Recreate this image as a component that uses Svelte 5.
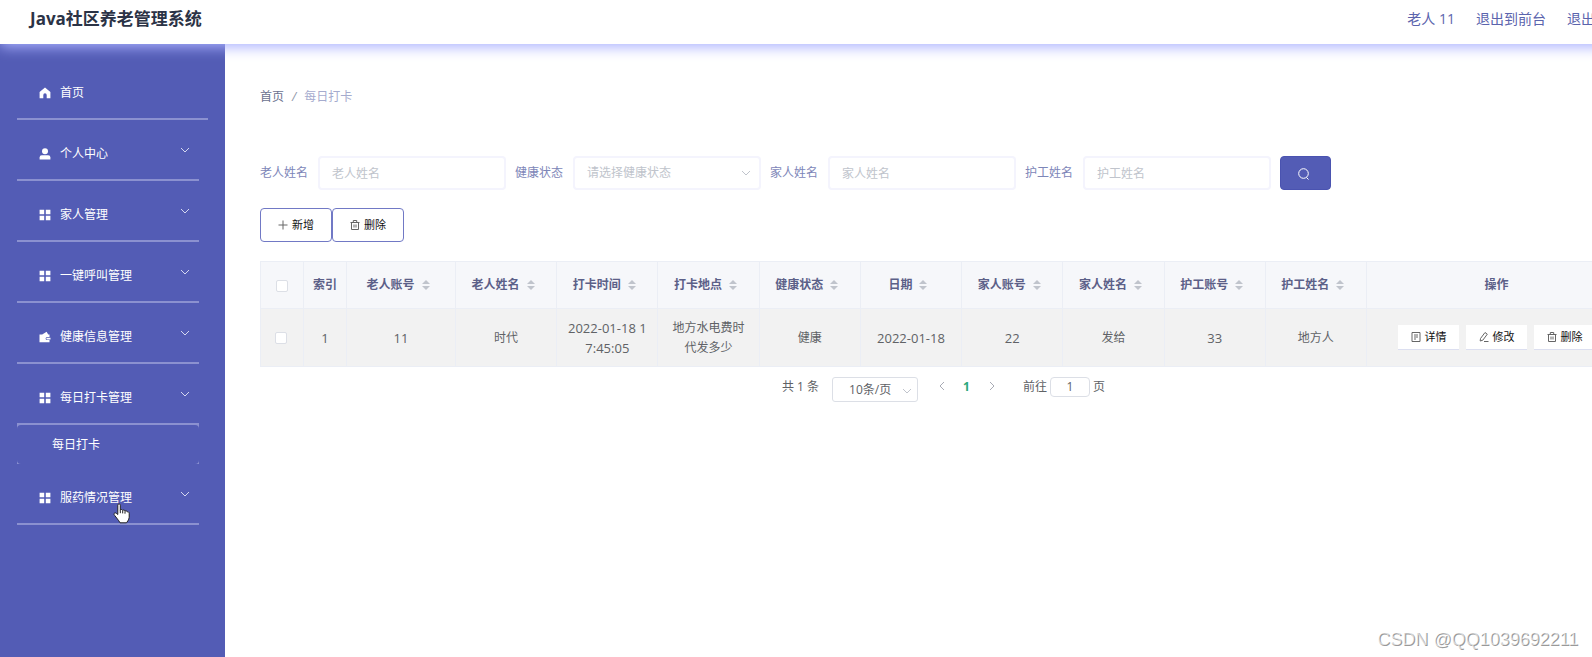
<script lang="ts">
  let keyword = { elder: '', health: '', family: '', nurse: '' };
  let pageSize = '10';
  let jumpPage = '1';

  const menus = [
    { name: '个人中心', icon: 'user', children: [] },
    { name: '家人管理', icon: 'grid', children: [] },
    { name: '一键呼叫管理', icon: 'grid', children: [] },
    { name: '健康信息管理', icon: 'wallet', children: [] },
    { name: '每日打卡管理', icon: 'grid', children: ['每日打卡'] },
    { name: '服药情况管理', icon: 'grid', children: [] }
  ];

  const columns = [
    { label: '老人账号', key: 'elderNo' },
    { label: '老人姓名', key: 'elderName' },
    { label: '打卡时间', key: 'time' },
    { label: '打卡地点', key: 'place' },
    { label: '健康状态', key: 'health' },
    { label: '日期', key: 'date' },
    { label: '家人账号', key: 'familyNo' },
    { label: '家人姓名', key: 'familyName' },
    { label: '护工账号', key: 'nurseNo' },
    { label: '护工姓名', key: 'nurseName' }
  ];

  const rows: any[] = [
    {
      elderNo: '11',
      elderName: '时代',
      time: '2022-01-18 17:45:05',
      place: '地方水电费时代发多少',
      health: '健康',
      date: '2022-01-18',
      familyNo: '22',
      familyName: '发给',
      nurseNo: '33',
      nurseName: '地方人'
    }
  ];

  const isNumeric = (value: string) => /^[\d\-: ]+$/.test(value);
</script>

<div class="viewport">
  <div class="page">
    <header class="topbar">
      <h1>Java社区养老管理系统</h1>
      <nav>
        <span>老人 11</span>
        <a href="#front">退出到前台</a>
        <a href="#logout">退出登录</a>
      </nav>
    </header>

    <div class="body">
      <aside>
        <ul class="menu">
          <li>
            <a href="#home" class="menu-item home">
              <svg class="menu-icon" viewBox="0 0 12 12"><path d="M6 .4 11.4 5v6.2H7.7V8a1.7 1.7 0 0 0-3.4 0v3.2H.6V5z" /></svg>
              首页
            </a>
          </li>
          {#each menus as menu}
            <li>
              <button type="button" class="menu-item">
                <svg class="menu-icon" viewBox="0 0 12 12">
                  {#if menu.icon === 'user'}
                    <circle cx="6" cy="3.2" r="3" />
                    <path d="M.6 11.6V9.4q0-2.2 2.2-2.2h6.4q2.2 0 2.2 2.2v2.2z" />
                  {:else if menu.icon === 'wallet'}
                    <path d="M.5 3.6h2.7L7.6.8l1.6 2.8h1.3v2.3H8.2a1.6 1.6 0 0 0 0 3.2h2.3v2.1H.5z" />
                    <path d="M8.2 6.7h3.3v1.7H8.2a.8.8 0 0 1 0-1.7z" />
                  {:else}
                    <path d="M.6.8h4.6v4.4H.6zM6.8.8h4.6v4.4H6.8zM.6 6.8h4.6v4.4H.6zM6.8 6.8h4.6v4.4H6.8z" />
                  {/if}
                </svg>
                {menu.name}
                <svg class="arrow" viewBox="0 0 10 6"><path d="M1 1l4 4 4-4" /></svg>
              </button>
              {#if menu.children.length}
                <div class="submenu">
                  {#each menu.children as child}
                    <a href="#checkin" class="sub-item">{child}</a>
                  {/each}
                </div>
              {/if}
            </li>
          {/each}
        </ul>
        <svg class="pointer" viewBox="0 0 17 21">
          <path d="M4.800 11.500V2.200c0-1.900 2.500-1.900 2.500 0v5c.4-1 2.200-.9 2.400.3.600-.8 2.100-.6 2.300.6.700-.7 2.200-.3 2.300.9.800-.4 1.900.1 1.900 1.300v4c0 1.300-.8 2.500-1.300 3.500l-1.400 2H7l-1.200-2L2.900 14c-.7-1.100-1.700-1.800-1.900-2.700-.2-1.300 1.400-1.900 2.400-.9z" />
          <path d="M7.300 7.200v3M9.700 7.600v2.800M12 8.200v2.500" />
        </svg>
      </aside>

      <main>
        <div class="breadcrumb">
          <a href="#home">首页</a><i>/</i><span>每日打卡</span>
        </div>

        <form class="search">
          <label for="elder">老人姓名</label>
          <input id="elder" type="text" placeholder="老人姓名" bind:value={keyword.elder} />
          <label for="health">健康状态</label>
          <div class="select">
            <select id="health" bind:value={keyword.health}>
              <option value="">请选择健康状态</option>
              <option value="健康">健康</option>
            </select>
            <svg viewBox="0 0 10 6"><path d="M1 1l4 4 4-4" /></svg>
          </div>
          <label for="family">家人姓名</label>
          <input id="family" type="text" placeholder="家人姓名" bind:value={keyword.family} />
          <label for="nurse">护工姓名</label>
          <input id="nurse" type="text" placeholder="护工姓名" bind:value={keyword.nurse} />
          <button type="button" class="search-button" aria-label="查询">
            <svg viewBox="0 0 12 12"><circle cx="5.5" cy="5.5" r="4.8" /><path d="M8.500 9.500l2 2" /></svg>
          </button>
        </form>

        <div class="tools">
          <button type="button">
            <svg viewBox="0 0 10 10"><path d="M5 .5v9M.5 5h9" /></svg>
            新增
          </button>
          <button type="button">
            <svg viewBox="0 0 10 10"><path d="M.5 2.500h9M3.300 2.500v-2h3.400v2M1.500 2.500v7h7v-7M4 4.500v3M6 4.500v3" /></svg>
            删除
          </button>
        </div>

        <table>
          <colgroup>
            <col class="col-check" />
            <col class="col-check" />
            <col class="col-first" />
            <col span="9" />
            <col class="col-action" />
          </colgroup>
          <thead>
            <tr>
              <th><input type="checkbox" aria-label="全选" /></th>
              <th class="index">索引</th>
              {#each columns as column}
                <th>
                  <span class="th-cell">
                    {column.label}
                    <svg class="sort" viewBox="0 0 8 10"><path d="M4 0l4 4H0zM4 10L0 6h8z" /></svg>
                  </span>
                </th>
              {/each}
              <th>操作</th>
            </tr>
          </thead>
          <tbody>
            {#each rows as row, i}
              <tr>
                <td class="check"><input type="checkbox" aria-label="选择" /></td>
                <td class="number">{i + 1}</td>
                {#each columns as column}
                  <td class:number={isNumeric(row[column.key])}>{row[column.key]}</td>
                {/each}
                <td>
                  <div class="actions">
                    <button type="button">
                      <svg viewBox="0 0 10 10"><path d="M1 .5h8v9H1zM3 3h4M3 5h4M3 7h2" /></svg>
                      详情
                    </button>
                    <button type="button">
                      <svg viewBox="0 0 10 10"><path d="M1.500 6.500l4.500-6 2.300 1.700-4.500 6-2.600.8zM5 9.500h4.500" /></svg>
                      修改
                    </button>
                    <button type="button">
                      <svg viewBox="0 0 10 10"><path d="M.5 2.500h9M3.300 2.500v-2h3.400v2M1.500 2.500v7h7v-7M4 4.500v3M6 4.500v3" /></svg>
                      删除
                    </button>
                  </div>
                </td>
              </tr>
            {/each}
          </tbody>
        </table>

        <div class="pagination">
          <span class="total">共 1 条</span>
          <div class="select small">
            <select aria-label="每页条数" bind:value={pageSize}>
              <option value="10">10条/页</option>
              <option value="20">20条/页</option>
            </select>
            <svg viewBox="0 0 10 6"><path d="M1 1l4 4 4-4" /></svg>
          </div>
          <button type="button" aria-label="上一页"><svg viewBox="0 0 6 10"><path d="M5 1L1 5l4 4" /></svg></button>
          <button type="button" class="current">1</button>
          <button type="button" aria-label="下一页"><svg viewBox="0 0 6 10"><path d="M1 1l4 4-4 4" /></svg></button>
          <label class="jump">前往<input type="text" bind:value={jumpPage} />页</label>
        </div>
      </main>
    </div>
  </div>
  <div class="watermark">CSDN @QQ1039692211</div>
</div>

<style>
  :global(body) {
    background: #fff;
  }
  .viewport {
    position: relative;
    overflow: hidden;
    font-family: "Open Sans", "Noto Sans CJK SC", sans-serif;
    font-size: 12px;
    line-height: 20px;
    color: #606266;
  }
  .page {
    display: flex;
    flex-direction: column;
    width: calc(100% + 70px);
    min-height: 100vh;
  }
  .viewport * {
    box-sizing: border-box;
  }
  button, input, select {
    font: inherit;
    color: inherit;
    margin: 0;
  }
  button {
    cursor: pointer;
  }
  a {
    color: inherit;
    text-decoration: none;
  }
  svg {
    flex: none;
    fill: none;
    stroke: currentColor;
  }

  .topbar {
    position: relative;
    z-index: 1;
    display: flex;
    align-items: center;
    justify-content: space-between;
    height: 44px;
    padding: 0 39px 7px 30px;
    background: #fff;
    box-shadow: 0 3px 14px rgb(170, 177, 255);
  }
  h1 {
    margin: 0;
    font-size: 17px;
    font-weight: 700;
    color: #2b3346;
  }
  nav {
    display: flex;
    gap: 21px;
    font-size: 14px;
    color: #5b64ad;
  }

  .body {
    display: flex;
    flex: 1;
  }
  aside {
    position: relative;
    flex: none;
    width: 225px;
    background: #535cb5;
    color: #fff;
  }
  .menu {
    list-style: none;
    margin: 0;
    padding: 15px 26px 0 17px;
  }
  .menu-item {
    display: flex;
    align-items: center;
    gap: 9px;
    width: 100%;
    height: 61px;
    padding: 8px 9px 0 22px;
    border: 0;
    border-bottom: 2px solid #8b91d0;
    background: none;
    text-align: left;
  }
  .home {
    width: calc(100% + 9px);
  }
  .menu-icon {
    width: 12px;
    height: 12px;
    fill: currentColor;
    stroke: none;
  }
  .arrow {
    width: 10px;
    height: 6px;
    margin: 0 0 8px auto;
    stroke: #d5d8f0;
  }
  .submenu {
    background: #8b91d0;
  }
  .sub-item {
    display: block;
    height: 39px;
    padding: 10px 0 0 35px;
    border-radius: 4px;
    background: #535cb5;
  }
  .pointer {
    position: absolute;
    left: 113px;
    top: 459px;
    width: 17px;
    height: 21px;
    fill: #fff;
    stroke: #222;
  }

  main {
    flex: 1;
    min-width: 0;
    padding: 43px 35px 0;
  }
  .breadcrumb {
    display: flex;
    gap: 8px;
    margin-bottom: 49px;
    color: #a5abce;
  }
  .breadcrumb a {
    color: #6b718f;
  }
  .breadcrumb i {
    color: #9095a8;
  }

  .search {
    display: flex;
    align-items: center;
    margin-bottom: 18px;
  }
  .search label {
    margin-right: 10px;
    color: #7d86b8;
  }
  .search input, .search .select {
    width: 188px;
    height: 34px;
    margin-right: 9px;
  }
  .search input, select {
    padding: 0 12px;
    border: 2px solid #f4f4fd;
    border-radius: 4px;
    background: #fff;
    outline: none;
  }
  .search input::placeholder {
    color: #c0c4cc;
    opacity: 1;
  }
  .select {
    position: relative;
    color: #c0c4cc;
  }
  select {
    width: 100%;
    height: 100%;
    appearance: none;
  }
  .select svg {
    position: absolute;
    right: 10px;
    top: 14px;
    width: 10px;
    height: 6px;
    pointer-events: none;
  }
  .search-button {
    width: 51px;
    height: 34px;
    padding: 0 4px 0 0;
    border: 1px solid #4a53b0;
    border-radius: 4px;
    background: #535cb5;
    color: #fff;
  }
  .search-button svg {
    width: 12px;
    height: 12px;
    vertical-align: middle;
  }

  .tools {
    display: flex;
    margin-bottom: 19px;
  }
  .tools button {
    display: flex;
    align-items: center;
    justify-content: center;
    gap: 4px;
    width: 72px;
    height: 34px;
    padding: 0;
    border: 1px solid #7179c5;
    border-radius: 4px;
    background: #fff;
    font-size: 11px;
    color: #111;
  }
  .tools svg, .actions svg {
    width: 10px;
    height: 10px;
    stroke: #666;
  }

  table {
    width: 100%;
    table-layout: fixed;
    border-collapse: collapse;
    text-align: center;
  }
  .col-check {
    width: 43px;
  }
  .col-first {
    width: 109px;
  }
  .col-action {
    width: 260px;
  }
  th, td {
    padding: 0 9px;
    border: 1px solid #ebeef5;
    word-break: break-all;
  }
  th {
    height: 47px;
    background: #f6f7fa;
    color: #5c6088;
    font-weight: 700;
  }
  th.index {
    padding: 0;
  }
  td {
    height: 58px;
    background: #f2f2f2;
  }
  td.check {
    padding-right: 12px;
  }
  .number {
    font-size: 13px;
  }
  .th-cell {
    display: flex;
    align-items: center;
    justify-content: center;
    gap: 7px;
    padding-right: 6px;
    white-space: nowrap;
  }
  .sort {
    width: 8px;
    height: 10px;
    fill: #c0c4cc;
    stroke: none;
  }
  input[type='checkbox'] {
    appearance: none;
    width: 12px;
    height: 12px;
    border: 1px solid #dcdfe6;
    border-radius: 2px;
    background: #fff;
    vertical-align: middle;
  }
  .actions {
    display: flex;
    justify-content: center;
    gap: 7px;
  }
  .actions button {
    display: flex;
    align-items: center;
    justify-content: center;
    gap: 4px;
    width: 61px;
    height: 25px;
    padding: 0;
    border: 0;
    border-bottom: 1px solid #dcdff0;
    background: #fff;
    font-size: 11px;
    color: #111;
  }

  .pagination {
    display: flex;
    justify-content: center;
    margin-top: 10px;
  }
  .total {
    margin-right: 13px;
  }
  .small {
    width: 86px;
    height: 25px;
    margin-right: 11px;
  }
  .small select {
    padding: 0 16px;
    border: 1px solid #dcdfe6;
    border-radius: 3px;
    color: #606266;
  }
  .small svg {
    right: 6px;
    top: 11px;
  }
  .pagination button {
    width: 25px;
    height: 20px;
    padding: 0;
    border: 0;
    background: none;
    color: #a8abb5;
  }
  .pagination button svg {
    width: 6px;
    height: 10px;
  }
  .pagination .current {
    color: #2aa87c;
    font-weight: 700;
  }
  .jump {
    display: flex;
    gap: 3px;
    margin-left: 19px;
  }
  .jump input {
    width: 40px;
    height: 20px;
    padding: 0;
    border: 1px solid #dcdfe6;
    border-radius: 4px;
    text-align: center;
  }

  .watermark {
    position: absolute;
    right: 14px;
    bottom: 8px;
    font-family: "Liberation Sans", sans-serif;
    font-size: 18px;
    color: rgba(255, 255, 255, 0.6);
    text-shadow: 1px 1px 0 #999;
  }
</style>
